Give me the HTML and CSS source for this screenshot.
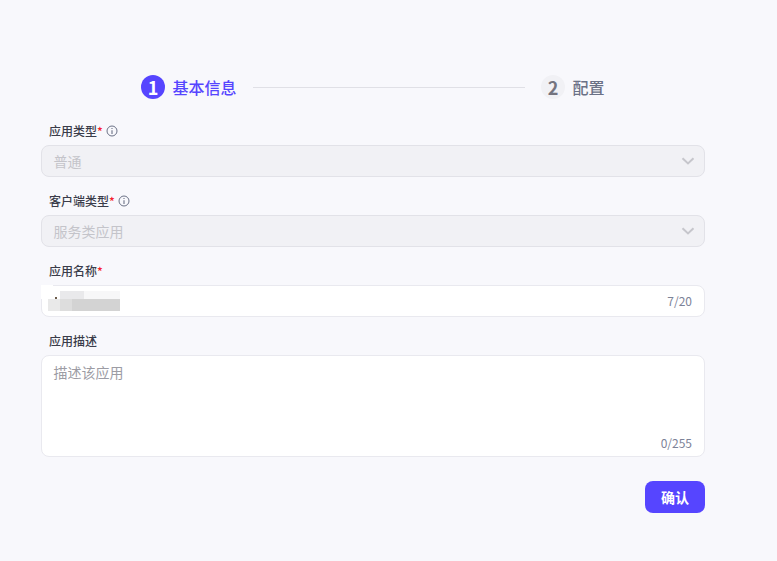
FILE: index.html
```html
<!DOCTYPE html>
<html lang="zh-CN">
<head>
<meta charset="utf-8">
<title>应用</title>
<link rel="stylesheet" href="styles.css">
</head>
<body>
<main class="page">
  <div class="steps">
    <div class="step active"><span class="num">1</span><span class="step-text">基本信息</span></div>
    <div class="step-line"></div>
    <div class="step"><span class="num">2</span><span class="step-text">配置</span></div>
  </div>
  <form class="form">
    <div class="field">
      <div class="label">应用类型<span class="req">*</span>
        <svg class="info" width="12" height="12" viewBox="0 0 12 12"><circle cx="6" cy="6" r="5" fill="none" stroke="#6b7186" stroke-width="1"/><path d="M6 5.2V9M6 3v1.1" stroke="#6b7186" stroke-width="1.1" fill="none"/></svg>
      </div>
      <div class="control select"><span>普通</span>
        <svg class="chev" width="14" height="8" viewBox="0 0 14 8"><path d="M1.5 1.2 7 6.4l5.5-5.2" fill="none" stroke="#c6c6cc" stroke-width="2"/></svg>
      </div>
    </div>
    <div class="field">
      <div class="label">客户端类型<span class="req">*</span>
        <svg class="info" width="12" height="12" viewBox="0 0 12 12"><circle cx="6" cy="6" r="5" fill="none" stroke="#6b7186" stroke-width="1"/><path d="M6 5.2V9M6 3v1.1" stroke="#6b7186" stroke-width="1.1" fill="none"/></svg>
      </div>
      <div class="control select"><span>服务类应用</span>
        <svg class="chev" width="14" height="8" viewBox="0 0 14 8"><path d="M1.5 1.2 7 6.4l5.5-5.2" fill="none" stroke="#c6c6cc" stroke-width="2"/></svg>
      </div>
    </div>
    <div class="field">
      <div class="label">应用名称<span class="req">*</span></div>
      <div class="control input">
        <div class="blur" aria-hidden="true">
          <i class="b0"></i><i class="b1"></i><i class="b6"></i><i class="b2"></i><i class="b3"></i><i class="b4"></i><i class="dot"></i>
        </div>
        <span class="count">7/20</span>
      </div>
    </div>
    <div class="field">
      <div class="label">应用描述</div>
      <div class="control area"><span class="ph">描述该应用</span><span class="count">0/255</span></div>
    </div>
    <div class="actions"><button type="button" class="btn">确认</button></div>
  </form>
</main>
</body>
</html>
```
FILE: styles.css
```css
* { box-sizing: border-box; }
html, body { margin: 0; height: 100%; }
body {
  background: #f8f8fc;
  font-family: "Noto Sans CJK SC", "Noto Sans", sans-serif;
  overflow: hidden;
}
.page { padding: 75px 72px 0 41px; }
.steps { display: flex; align-items: center; height: 24px; padding-left: 100px; padding-right: 100px; }
.step { display: flex; align-items: center; gap: 8px; font-size: 16px; color: #6b7186; line-height: 24px; font-weight: 500; }
.step-text { margin-left: -0.5px; margin-right: 0.5px; }
.step.active { color: #5645ff; }
.num {
  width: 24px; height: 24px; border-radius: 50%;
  display: flex; align-items: center; justify-content: center;
  background: #f1f1f5; font-weight: 700; font-size: 18px; color: #74747f;
}
.active .num { background: #5645ff; color: #fff; }
.step-line { flex: 1; height: 1px; background: #e0e0e6; margin: 0 16px; }
.form { margin-top: 21px; }
.field { margin-bottom: 13px; }
.label {
  display: flex; align-items: center; height: 22px; padding-left: 8px; margin-bottom: 3px;
  font-size: 12px; line-height: 22px; color: #3a3c4a; font-weight: 500;
}
.req { color: #f5222d; }
.info { margin-left: 3px; }
.control {
  position: relative; width: 664px; height: 32px; border: 1px solid #e9e9ef;
  border-radius: 8px; background: #fff; font-size: 14px; line-height: 30px; padding: 0 12px;
}
.select {
  background: #f1f1f5; border-color: #e2e2e8; color: #c4c4ca;
  display: flex; align-items: center; justify-content: space-between;
}
.select span { margin-top: -1px; margin-left: -0.5px; }
.chev { margin-right: -3px; }
.input { display: flex; align-items: center; justify-content: flex-end; padding-right: 12px; }
.count { font-size: 12px; color: #7d8398; }
.area { height: 102px; display: block; line-height: 20px; padding-top: 6px; }
.ph { color: #9c9ca4; margin-left: -0.5px; }
.area .count { position: absolute; right: 12px; bottom: 3px; }
.blur { position: absolute; left: -1px; top: -1px; width: 80px; height: 28px; }
.blur i { position: absolute; display: block; }
.b0 { left: 0; top: 0; width: 12px; height: 14px; background: #fff; }
.b1 { left: 19px; top: 6px; width: 24px; height: 8px; background: #e9e9eb; }
.b6 { left: 43px; top: 6px; width: 36px; height: 8px; background: #f7f7f8; }
.b2 { left: 7px; top: 14px; width: 12px; height: 12px; background: #e9e9e9; }
.b3 { left: 19px; top: 14px; width: 12px; height: 12px; background: #dddddd; }
.b4 { left: 31px; top: 14px; width: 48px; height: 12px; background: #d3d3d3; }
.dot { left: 14px; top: 12px; width: 2px; height: 2px; background: #6b5a4a; }
.actions { display: flex; justify-content: flex-end; width: 664px; margin-top: 24px; }
.btn {
  width: 60px; height: 32px; border: 0; border-radius: 8px; background: #5645ff; color: #fff;
  font: 700 14px "Noto Sans CJK SC", sans-serif;
}
```
